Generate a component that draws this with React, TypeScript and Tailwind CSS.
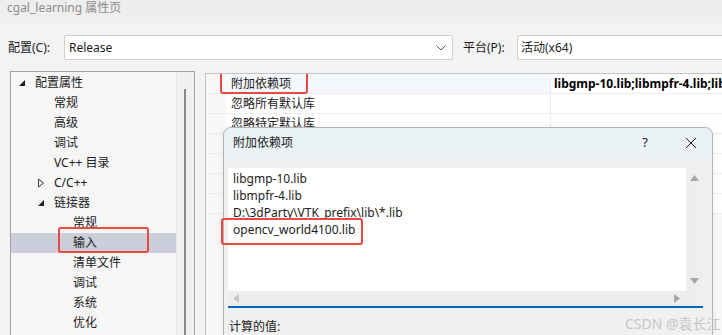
import React from "react";

const font = "font-['Noto_Sans','Noto_Sans_CJK_SC',sans-serif]";

type TreeItem = { label: string; level: number; arrow?: "open" | "closed"; selected?: boolean };

const treeItems: TreeItem[] = [
  { label: "配置属性", level: 0, arrow: "open" },
  { label: "常规", level: 1 },
  { label: "高级", level: 1 },
  { label: "调试", level: 1 },
  { label: "VC++ 目录", level: 1 },
  { label: "C/C++", level: 1, arrow: "closed" },
  { label: "链接器", level: 1, arrow: "open" },
  { label: "常规", level: 2 },
  { label: "输入", level: 2, selected: true },
  { label: "清单文件", level: 2 },
  { label: "调试", level: 2 },
  { label: "系统", level: 2 },
  { label: "优化", level: 2 },
];

const indent = ["pl-[4px]", "pl-[23px]", "pl-[42px]"];

function Arrow({ kind }: { kind?: "open" | "closed" }) {
  if (kind === "open") {
    return (
      <svg width="8" height="8" viewBox="0 0 8 8">
        <path d="M7 1 L7 7 L1 7 Z" fill="#1e1e1e" />
      </svg>
    );
  }
  if (kind === "closed") {
    return (
      <svg width="8" height="10" viewBox="0 0 8 10">
        <path d="M1.5 1 L6.5 5 L1.5 9 Z" fill="none" stroke="#3a3a3a" strokeWidth="1" />
      </svg>
    );
  }
  return null;
}

function Tree() {
  return (
    <div className="flex w-[185px] shrink-0 border border-[#a3a3a3] bg-[#f6f6f6] mt-[-2px]">
      <div className="flex-1 pt-[1px]">
        {treeItems.map((item, i) => (
          <div
            key={i}
            className={`relative flex h-5 items-center ${indent[item.level]} ${
              item.selected ? "bg-[#cccedb]" : ""
            }`}
          >
            <span className="flex w-[14px] justify-center">
              <Arrow kind={item.arrow} />
            </span>
            <span className="ml-[6px] text-[12px] text-[#1b1b1b]">{item.label}</span>
            {item.selected && (
              <div className="absolute left-[47px] top-[-6px] h-[26px] w-[91px] rounded-[3px] border-2 border-[#e84a3f]" />
            )}
          </div>
        ))}
      </div>
      <div className="relative w-[18px] border-l border-[#e6e6e6] bg-[#f0f0f0]">
        <div className="absolute left-[7px] top-[17px] h-[300px] w-[2px] bg-[#8a8a8a]" />
      </div>
    </div>
  );
}

function PropertyGrid() {
  const rows = [
    { name: "附加依赖项", value: "libgmp-10.lib;libmpfr-4.lib;libmpfr-4.lib", first: true },
    { name: "忽略所有默认库", value: "" },
    { name: "忽略特定默认库", value: "" },
    { name: "", value: "" },
    { name: "", value: "" },
    { name: "", value: "" },
    { name: "", value: "" },
  ];
  return (
    <div className="ml-[10px] flex-1 overflow-hidden border-l border-t border-[#c4c4c4] bg-[#f7f7f7]">
      {rows.map((r, i) => (
        <div key={i} className="flex h-5 border-b border-[#ececec]">
          <div className="w-[20px] shrink-0" />
          <div
            className={`relative flex w-[325px] shrink-0 items-center border-r border-[#ececec] pl-[5px] text-[12px] text-[#1b1b1b] ${
              r.first ? "bg-[#f4f7fb]" : "bg-white"
            }`}
          >
            {r.name}
            {r.first && (
              <div className="absolute left-[-6px] top-[-4px] h-[24px] w-[88px] rounded-[3px] border-2 border-[#e84a3f]" />
            )}
          </div>
          <div className="flex flex-1 items-center whitespace-nowrap bg-white pl-[3px] text-[12px] font-bold text-black">
            {r.value}
          </div>
        </div>
      ))}
    </div>
  );
}

function Dialog() {
  const lines = ["libgmp-10.lib", "libmpfr-4.lib", "D:\\3dParty\\VTK_prefix\\lib\\*.lib", "opencv_world4100.lib"];
  return (
    <div className="absolute left-[223px] top-[127px] flex h-[230px] w-[490px] flex-col rounded-t-[8px] border border-[#b4b4b4] bg-[#f0f0f0] shadow-[0_0_6px_rgba(0,0,0,0.08)]">
      <div className="flex h-[30px] items-center rounded-t-[8px] bg-[#ebf2f6] pl-[9px] pr-[15px] text-[12px] text-[#1b1b1b]">
        <span className="flex-1">附加依赖项</span>
        <span className="mr-[37px] text-[13px]">?</span>
        <svg width="12" height="12" viewBox="0 0 12 12">
          <path d="M1 1 L11 11 M11 1 L1 11" stroke="#1e1e1e" strokeWidth="1" />
        </svg>
      </div>
      <div className="ml-[4px] mr-[9px] mt-[10px] flex flex-col border-b-2 border-[#0067c0]">
        <div className="flex h-[123px]">
          <div className="relative flex-1 bg-white pl-[5px] pt-[2px] text-[12px] leading-[17px] text-[#1b1b1b]">
            {lines.map((l) => (
              <div key={l}>{l}</div>
            ))}
            <div className="absolute left-[-7px] top-[50px] h-[27px] w-[142px] rounded-[3px] border-2 border-[#e84a3f]" />
          </div>
          <div className="flex w-[17px] flex-col items-center justify-between bg-[#eeeeee] py-[7px]">
            <svg width="9" height="6" viewBox="0 0 9 6">
              <path d="M4.5 0 L9 6 L0 6 Z" fill="#a6a6a6" />
            </svg>
            <svg width="9" height="6" viewBox="0 0 9 6">
              <path d="M0 0 L9 0 L4.5 6 Z" fill="#a6a6a6" />
            </svg>
          </div>
        </div>
        <div className="flex h-[15px] items-center justify-between bg-[#eeeeee] pl-[5px] pr-[23px]">
          <svg width="6" height="9" viewBox="0 0 6 9">
            <path d="M6 0 L6 9 L0 4.5 Z" fill="#c4c4c4" />
          </svg>
          <svg width="6" height="9" viewBox="0 0 6 9">
            <path d="M0 0 L6 4.5 L0 9 Z" fill="#a6a6a6" />
          </svg>
        </div>
      </div>
      <div className="ml-[5px] mt-[10px] text-[12px] text-[#1b1b1b]">计算的值:</div>
    </div>
  );
}

export default function App() {
  return (
    <div className={`relative h-[335px] w-[722px] overflow-hidden bg-[#f3f3f3] ${font}`}>
      <div className="flex h-[23px] items-start bg-[#eeeeee] pl-[7px] text-[12px] leading-[16px] text-[#8c8c8c]">
        cgal_learning 属性页
      </div>
      <div className="mt-[12px] flex h-[25px] items-center pl-[8px] text-[12px] text-[#1b1b1b]">
        <span className="w-[56px]">配置(C):</span>
        <div className="flex h-[25px] w-[389px] items-center justify-between rounded-[2px] border border-[#cfcfcf] bg-white pl-[4px] pr-[6px]">
          <span>Release</span>
          <svg width="10" height="6" viewBox="0 0 10 6">
            <path d="M0.5 0.5 L5 5 L9.5 0.5" fill="none" stroke="#555" strokeWidth="1" />
          </svg>
        </div>
        <span className="ml-[10px] w-[54px]">平台(P):</span>
        <div className="flex h-[25px] flex-1 items-center rounded-l-[2px] border border-r-0 border-[#cfcfcf] bg-white pl-[3px]">
          活动(x64)
        </div>
      </div>
      <div className="mt-[13px] flex h-[300px] pl-[10px]">
        <Tree />
        <PropertyGrid />
      </div>
      <Dialog />
      <div className="absolute left-[625px] top-[313px] text-[14px] text-[#c6c6c6]">CSDN @袁长江</div>
    </div>
  );
}
